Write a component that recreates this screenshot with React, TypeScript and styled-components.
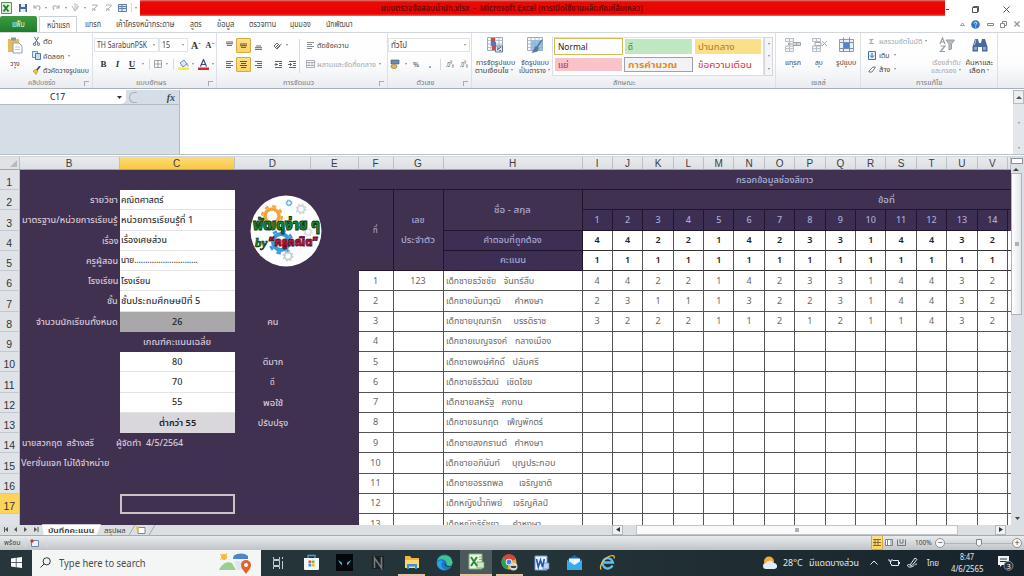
import React, { useLayoutEffect, useRef, useState } from 'react';
import styled, { createGlobalStyle, css } from 'styled-components';

const Global = createGlobalStyle`
  * { box-sizing: border-box; }
  body { margin: 0; overflow: hidden; background: #fff; }
  svg { display: block; flex: none; }
`;

const ui = `"Noto Sans", "Noto Sans Thai", "Loma", "Liberation Sans", sans-serif`;

/* ---------- text that keeps a fixed width ---------- */
const FitBox = styled.span<{ $w: number }>`
  display: block;
  flex: none;
  width: ${(p) => p.$w}px;
  white-space: pre;
  text-align: left;
`;
const FitInner = styled.span`
  display: inline-block;
  transform-origin: 0 50%;
`;
function Fit({ w, children }: { w: number; children: React.ReactNode }) {
  const ref = useRef<HTMLSpanElement>(null);
  const [k, setK] = useState(1);
  useLayoutEffect(() => {
    if (ref.current && ref.current.offsetWidth) setK(w / ref.current.offsetWidth);
  }, [w]);
  return (
    <FitBox $w={w}>
      <FitInner ref={ref} style={{ transform: `scaleX(${k})` }}>{children}</FitInner>
    </FitBox>
  );
}

/* ---------- window frame ---------- */
const Window = styled.div`
  width: 1024px;
  height: 576px;
  display: flex;
  flex-direction: column;
  overflow: hidden;
  background: #fff;
  font: 8px/10px ${ui};
  color: #444;
`;
const TitleBar = styled.div`
  height: 16px;
  flex: none;
  display: flex;
  align-items: flex-start;
`;
const QuickAccess = styled.div`
  width: 140px;
  height: 15px;
  display: flex;
  align-items: center;
`;
const RedTitle = styled.div`
  width: 805px;
  height: 16px;
  background: linear-gradient(#d98078 0, #e90a05 2px, #e80400 14px, #f06a64 16px);
  padding: 3px 0 0 241px;
  color: #6a0806;
  font-weight: 600;
  font-size: 8px;
`;
const WinButtons = styled.div`
  flex: 1;
  height: 19px;
  display: flex;
  align-items: center;
  color: #444;
`;
const Slot = styled.div<{ $w: number; $on?: boolean; $h?: number }>`
  width: ${(p) => p.$w}px;
  height: ${(p) => (p.$h ? p.$h + 'px' : 'auto')};
  flex: none;
  display: flex;
  align-items: center;
  justify-content: center;
  ${(p) => p.$on && css`
    height: 15px;
    border: 1px solid #d8a93c;
    border-radius: 1px;
    background: linear-gradient(#fbe08c, #fcd364);
  `}
`;

/* ---------- ribbon ---------- */
const TabRow = styled.div`
  height: 16px;
  flex: none;
  display: flex;
  align-items: center;
  font-size: 8px;
`;
const FileTab = styled.div`
  width: 37px;
  height: 16px;
  background: linear-gradient(#3e9a42, #1f7d2a);
  border-radius: 2px 2px 0 0;
  color: #eaf6e6;
  display: flex;
  align-items: center;
  justify-content: center;
`;
const HomeTab = styled.div`
  width: 38px;
  height: 17px;
  margin: 1px 8px 0 2px;
  border: 1px solid #cdd2d8;
  border-bottom: 0;
  background: #fff;
  display: flex;
  align-items: center;
  justify-content: center;
`;
const Tab = styled.div<{ $gap: number }>`
  margin-right: ${(p) => p.$gap}px;
`;
const Ribbon = styled.div`
  height: 57px;
  flex: none;
  display: flex;
  border-top: 1px solid #d3d7dc;
  border-bottom: 1px solid #a9afb6;
  background: linear-gradient(#fff 0, #fdfdfe 55%, #e9ecf0 100%);
`;
const Group = styled.div<{ $w: number }>`
  width: ${(p) => p.$w}px;
  flex: none;
  display: flex;
  flex-direction: column;
  border-right: 1px solid #dde0e4;
`;
const GroupBody = styled.div`
  height: 45px;
  display: flex;
`;
const GroupName = styled.div`
  height: 10px;
  display: flex;
  align-items: center;
  justify-content: center;
  color: #777c82;
  font-size: 7px;
`;
const Launcher = styled.i`
  width: 5px;
  height: 5px;
  border: 1px solid #a5abb3;
  border-right: 0;
  border-bottom: 0;
  margin-right: 3px;
`;
const NameText = styled.span`
  flex: 1;
  display: flex;
  justify-content: center;
`;
const BigButton = styled.div<{ $w: number; $dim?: boolean }>`
  width: ${(p) => p.$w}px;
  flex: none;
  display: flex;
  flex-direction: column;
  align-items: center;
  padding-top: 4px;
  font-size: 7.5px;
  line-height: 8px;
  color: ${(p) => (p.$dim ? '#a4a8ad' : '#444')};
  svg { margin-bottom: 5px; }
`;
const Col = styled.div<{ $pt?: number; $gap?: number }>`
  display: flex;
  flex-direction: column;
  padding-top: ${(p) => p.$pt ?? 0}px;
  gap: ${(p) => p.$gap ?? 0}px;
`;
const Row = styled.div<{ $dim?: boolean; $h?: number }>`
  display: flex;
  align-items: center;
  height: ${(p) => p.$h ?? 14}px;
  font-size: 7.5px;
  color: ${(p) => (p.$dim ? '#a4a8ad' : '#444')};
`;
const Combo = styled.div<{ $w: number }>`
  width: ${(p) => p.$w}px;
  height: 14px;
  flex: none;
  border: 1px solid #e0e3e7;
  background: #fff;
  display: flex;
  align-items: center;
  justify-content: space-between;
  padding: 0 3px 0 2px;
  font-size: 8px;
`;
const Arrow = styled.i`
  width: 0;
  height: 0;
  flex: none;
  border: 1.5px solid transparent;
  border-top: 2px solid #888;
  border-bottom: 0;
`;
const VLine = styled.i<{ $h: number }>`
  width: 1px;
  height: ${(p) => p.$h}px;
  background: #d7dade;
`;
const Letter = styled.span<{ $size: number; $italic?: boolean; $under?: boolean }>`
  font: ${(p) => (p.$italic ? 'italic ' : '')}bold ${(p) => p.$size}px "Liberation Serif", serif;
  text-decoration: ${(p) => (p.$under ? 'underline' : 'none')};
  color: #333;
`;
const Gallery = styled.div`
  width: 212px;
  height: 39px;
  margin-top: 4px;
  border: 1px solid #dcdfe3;
  background: #fff;
  display: grid;
  grid-template-columns: 69px 69px 68px;
  grid-template-rows: 17px 15px;
  gap: 2px 1px;
  padding: 0 1px 1px;
`;
const StyleCell = styled.div<{ $bg: string; $fg: string; $b?: string }>`
  background: ${(p) => p.$bg};
  color: ${(p) => p.$fg};
  border: 1px solid ${(p) => p.$b ?? '#fff'};
  padding-left: 3px;
  display: flex;
  align-items: center;
  font-size: 9.5px;
`;
const GalleryBar = styled.div`
  width: 9px;
  height: 39px;
  margin-top: 4px;
  border: 1px solid #d3d7db;
  background: #f4f5f7;
  display: flex;
  flex-direction: column;
  align-items: center;
  justify-content: space-around;
`;

/* ---------- formula bar ---------- */
const FormulaBar = styled.div`
  height: 65px;
  flex: none;
  display: flex;
  background: #fff;
  border-bottom: 1px solid #b9bfc6;
  margin-top: 1px;
`;
const NamePane = styled.div`
  width: 180px;
  background: #d5dde6;
  border-right: 1px solid #b4bac2;
`;
const NameRow = styled.div`
  height: 15px;
  display: flex;
  border-bottom: 1px solid #b4bac2;
`;
const NameBox = styled.div`
  width: 126px;
  background: #fff;
  border-radius: 0 0 5px 0;
  display: flex;
  align-items: center;
  padding: 0 4px 0 50px;
  justify-content: space-between;
  color: #222;
  font-size: 8.5px;
`;
const FxArea = styled.div`
  flex: 1;
  display: flex;
  align-items: center;
  justify-content: space-between;
  padding: 0 4px 0 3px;
  font: italic bold 10px "Liberation Serif", serif;
`;
const Bubble = styled.i`
  width: 8px;
  height: 11px;
  border: 1px solid #a9b2bd;
  border-right: 0;
  border-radius: 6px 0 0 6px;
`;
const FormulaInput = styled.div`
  flex: 1;
`;
const ThinBar = styled.div`
  width: 11px;
  background: #e3e7eb;
  display: flex;
  flex-direction: column;
  justify-content: space-between;
`;
const BarButton = styled.div<{ $h: number }>`
  height: ${(p) => p.$h}px;
  border: 1px solid #b4bac1;
  background: #eceff2;
  display: flex;
  align-items: center;
  justify-content: center;
`;

/* ---------- sheet ---------- */
const COLS = '100px 115px 76.5px 47.5px 35px 50px 139px repeat(14, 30.4px) 3px';
const SheetArea = styled.div`
  height: 368.5px;
  flex: none;
  display: flex;
  margin-top: 1px;
  border-top: 1px solid #d4d8dc;
`;
const SheetMain = styled.div`
  width: 1011px;
  display: flex;
  flex-direction: column;
  overflow: hidden;
`;
const HeadRow = styled.div`
  height: 13px;
  flex: none;
  display: grid;
  grid-template-columns: 19.5px ${COLS};
  background: #e0e2e6;
  border-bottom: 1px solid #a2a4aa;
`;
const ColHead = styled.div<{ $on?: boolean }>`
  display: flex;
  align-items: center;
  justify-content: center;
  font: 10px "Liberation Sans", sans-serif;
  color: #3c3c40;
  border-right: 1px solid #bcc0c6;
  background: ${(p) => (p.$on ? 'linear-gradient(#fbdc7d, #fac842)' : 'linear-gradient(#e9ebee, #dcdfe3)')};
`;
const Corner = styled.div`
  display: flex;
  align-items: flex-end;
  justify-content: flex-end;
  padding: 2px;
  border-right: 1px solid #bcc0c6;
`;
const SheetBody = styled.div`
  height: 354.5px;
  display: flex;
  overflow: hidden;
`;
const RowHeads = styled.div`
  width: 19.5px;
  flex: none;
  display: grid;
  grid-template-rows: 20px repeat(17, 20.25px);
  background: #dfe3e8;
`;
const RowHead = styled.div<{ $on?: boolean }>`
  display: flex;
  align-items: flex-end;
  justify-content: center;
  font: 10.5px/13px "Liberation Sans", sans-serif;
  color: #333;
  border-bottom: 1px solid #c3c8ce;
  border-right: 1px solid #b8bcc4;
  background: ${(p) => (p.$on ? '#fcd45c' : 'transparent')};
`;
const Grid = styled.div`
  width: 994px;
  flex: none;
  display: grid;
  grid-template-columns: ${COLS};
  grid-template-rows: 20px repeat(17, 20.25px);
  background: #403150;
  font-size: 9px;
`;
type CellProps = {
  $c: number; $r: number; $cs?: number; $rs?: number; $kind: 'plain' | 'white' | 'head' | 'key' | 'score' | 'grey' | 'light' | 'sel' | 'low' | 'top';
  $align?: 'start' | 'center' | 'end';
};
const kinds = {
  plain: css`color: #d8cad9; font-weight: 500;`,
  white: css`background: #fff; color: #333; border-bottom: 1px solid #e4e4e6; font-weight: 500;`,
  top: css`color: #aeb3dc; border-bottom: 1px solid #21152e; font-weight: 500;`,
  head: css`color: #aaa9d0; border-right: 1px solid #21152e; border-bottom: 1px solid #21152e; font-weight: 500;`,
  low: css`color: #aaa9d0; border-right: 1px solid #21152e; border-bottom: 1px solid #21152e; background: #3d2f54; font-weight: 500;`,
  key: css`background: #fff; color: #222; font-weight: 600; border-right: 1px solid #555; border-bottom: 1px solid #333;`,
  score: css`background: #fff; color: #666; border-right: 1px solid #555; border-bottom: 1px solid #555;`,
  grey: css`background: #a9a7aa; color: #222; font-weight: 500;`,
  light: css`background: #d9d6dc; color: #222; font-weight: 600;`,
  sel: css`border: 2px solid #cbc1c8;`,
};
const Cell = styled.div<CellProps>`
  grid-column: ${(p) => p.$c} / span ${(p) => p.$cs ?? 1};
  grid-row: ${(p) => p.$r} / span ${(p) => p.$rs ?? 1};
  display: flex;
  flex-direction: column;
  justify-content: center;
  align-items: ${(p) => p.$align ?? 'center'};
  padding: 0 1.5px;
  line-height: 20px;
  min-width: 0;
  white-space: pre;
  overflow: visible;
  ${(p) => kinds[p.$kind]}
`;
const VScroll = styled.div`
  width: 13px;
  background: #d9dfe5;
  display: flex;
  flex-direction: column;
`;
const Split = styled.div`
  height: 6px;
  margin: 1px 1px 1px 0;
  border: 1px solid #8d939b;
  background: #fff;
`;
const Thumb = styled.div`
  height: 142px;
  border: 1px solid #adb3bb;
  background: linear-gradient(90deg, #fff, #e3e6ea);
  margin: 0 2px 0 0;
  display: flex;
  align-items: center;
  justify-content: center;
`;
const Grip = styled.i`
  width: 4px;
  height: 4px;
  background: #adb2b8;
`;
const Spacer = styled.div`
  flex: 1;
`;

/* ---------- sheet tabs + status ---------- */
const SheetTabs = styled.div`
  height: 11.5px;
  flex: none;
  display: flex;
  align-items: center;
  background: #dcdfe2;
  border-bottom: 1px solid #a6abb0;
  font-size: 7.5px;
`;
const ActiveTab = styled.div`
  height: 11px;
  width: 59px;
  padding-left: 6px;
  background: #fdfdfd;
  font-weight: 600;
  color: #333;
  display: flex;
  align-items: center;
  clip-path: polygon(0 0, 100% 0, 92% 100%, 3% 100%);
`;
const HTrack = styled.div`
  width: 322px;
  height: 10px;
  display: flex;
  background: #fafafb;
  border: 1px solid #c1c5ca;
  align-items: center;
  justify-content: center;
`;
const HButton = styled.div`
  width: 11px;
  height: 10px;
  border: 1px solid #b4b8bd;
  background: #f0f1f3;
  display: flex;
  align-items: center;
  justify-content: center;
`;
const StatusBar = styled.div`
  height: 13.5px;
  flex: none;
  display: flex;
  align-items: center;
  background: linear-gradient(#e8ebed, #bfc4c8);
  font-size: 7px;
  padding-left: 4px;
`;
const Round = styled.div`
  width: 10px;
  height: 10px;
  border: 1px solid #8c9197;
  border-radius: 50%;
  background: #f6f7f8;
  display: flex;
  align-items: center;
  justify-content: center;
  font-size: 9px;
`;
const ZoomTrack = styled.div`
  width: 67px;
  display: flex;
  justify-content: center;
  background: linear-gradient(transparent 4px, #b1b6bb 4px, #b1b6bb 5px, transparent 5px);
`;

/* ---------- taskbar ---------- */
const Taskbar = styled.div`
  height: 26.5px;
  flex: none;
  display: flex;
  align-items: center;
  background: linear-gradient(90deg, #26363a 0, #243337 55%, #17232c 100%);
  color: #e6eaec;
`;
const Search = styled.div`
  width: 229px;
  height: 26.5px;
  background: #f4f5f5;
  display: flex;
  align-items: center;
  padding: 0 8px;
  color: #4b4b4b;
  font-size: 10.5px;
`;
const AppSlot = styled.div<{ $active?: boolean; $open?: boolean; $w?: number }>`
  width: ${(p) => p.$w ?? 33}px;
  height: 26.5px;
  flex: none;
  display: flex;
  align-items: center;
  justify-content: center;
  background: ${(p) => (p.$active ? '#4b585c' : 'transparent')};
  background-clip: padding-box;
  border-top: ${(p) => (p.$active ? 0 : 2)}px solid transparent;
  border-bottom: 2px solid ${(p) => (p.$open ? '#e4c3a4' : 'transparent')};
`;
const Clock = styled.div`
  width: 36px;
  display: flex;
  flex-direction: column;
  align-items: center;
  font-size: 8px;
  line-height: 12px;
`;

/* ---------- icons ---------- */
const Lines = ({ a = 'c', c = '#666' }: { a?: string; c?: string }) => (
  <svg width="9" height="9" viewBox="0 0 9 9" stroke={c} fill="none">
    {a === 't' && <path d="M1 1h7M1 2.7h7M2 4.4h5" />}
    {a === 'm' && <path d="M1 3h7M1 4.7h7M2 6.4h5" />}
    {a === 'b' && <path d="M2 5h5M1 6.7h7M1 8.4h7" />}
    {a === 'l' && <path d="M1 1.5h7M1 3.5h5M1 5.5h7M1 7.5h5" />}
    {a === 'c' && <path d="M1 1.5h7M2 3.5h5M1 5.5h7M2 7.5h5" />}
    {a === 'r' && <path d="M1 1.5h7M3 3.5h5M1 5.5h7M3 7.5h5" />}
    {a === 'i' && <path d="M1 1.5h7M5 3.5h3M5 5.5h3M1 7.5h7M4 4.5H1l1.5-1.5M1 4.5l1.5 1.5" />}
    {a === 'o' && <path d="M1 1.5h7M5 3.5h3M5 5.5h3M1 7.5h7M0 4.5h3.5L2 3M3.5 4.5L2 6" />}
  </svg>
);
const TableIcon = ({ v }: { v: 'cond' | 'fmt' }) => (
  <svg width="16" height="16" viewBox="0 0 16 16">
    <path d="M.5.5h15v13H.5z" fill="#f6f9fd" stroke="#9eaab8" />
    <path d="M.5 3.5h15M.5 7h15M.5 10.5h15M4 .5v13M8 .5v13M12 .5v13" stroke="#a9b5c4" fill="none" strokeWidth=".8" />
    {v === 'cond' ? (
      <>
        <path d="M4 1h4v4H4zM5 9h3v4H5z" fill="#c94b45" />
        <path d="M4 5h5v4H4z" fill="#4e79c0" />
        <path d="M8.5 9h7v6h-7z" fill="#dfe7f2" stroke="#52627a" strokeWidth=".8" />
        <path d="M10 13l4-3M10 11h1.5M12.5 13.5H14" stroke="#3d4b61" />
      </>
    ) : (
      <>
        <path d="M4 3.5h11.5v10H4z" fill="#7fb2e5" opacity=".8" />
        <path d="M15 3l-5 7M9 10l2 1-1 3-4 1z" stroke="#5b7795" fill="#3f7bb8" strokeWidth="1.4" />
      </>
    )}
  </svg>
);
const CellsIcon = ({ v }: { v: 'ins' | 'del' | 'fmt' }) => (
  <svg width="17" height="16" viewBox="0 0 17 16" fill="none">
    {v !== 'fmt' ? (
      <>
        <path d="M1.5 1.5h8v3h-8zM1.5 9h8v5.500h-8zM5.500 1.500v3M5.500 9v5.500M1.500 11.700h8" stroke="#b9bdc2" fill="#f5f6f7" />
        {v === 'ins' ? (
          <path d="M9 5.500h7.500v3H9zM12.500 5.500v3M8 7H4l2-1.500M4 7l2 1.500" stroke="#9da3a9" fill="#d8dbdf" />
        ) : (
          <path d="M4 5.500h6v3H4zM11 4l5 5M16 4l-5 5" stroke="#a1a7ae" />
        )}
      </>
    ) : (
      <>
        <path d="M1.500 2.500h14v12h-14z" fill="#e8f0fa" stroke="#8f9dae" />
        <path d="M1.500 5.500h14M1.500 11.500h14M5.500 .5v14M11.500 .5v14" stroke="#7d8ea4" />
        <path d="M6 6h5v5H6z" fill="#4b86d2" />
      </>
    )}
  </svg>
);
const Gear = ({ x, y, r, c }: { x: number; y: number; r: number; c: string }) => (
  <g transform={`translate(${x} ${y})`} fill="none" stroke={c}>
    <circle r={r} strokeWidth={r * 0.5} />
    <circle r={r * 1.4} strokeWidth={r * 0.35} strokeDasharray={`${r * 0.55} ${r * 0.55}`} />
  </g>
);
const LogoSlot = styled.div`
  padding-left: 5px;
  svg { overflow: visible; }
`;
const logoFont = { fontFamily: ui, fontWeight: 900 } as const;
const Logo = () => (
  <svg width="73" height="72" viewBox="0 0 73 72">
    <circle cx="36" cy="36" r="35.500" fill="#fff" />
    <Gear x={22} y={21} r={7} c="#f0a63c" />
    <Gear x={31} y={47} r={8} c="#3a9bdc" />
    <Gear x={39} y={8} r={2.200} c="#4aa8d8" />
    <Gear x={51} y={14} r={3.500} c="#ccd3dc" />
    <Gear x={38} y={61} r={3.500} c="#c3cdd0" />
    <Gear x={58} y={37} r={3} c="#d7dce2" />
    <text x="3" y="35" textLength="67" lengthAdjust="spacingAndGlyphs" fontSize="15" style={logoFont} fill="#1d8a2c" stroke="#0c3d16" strokeWidth="1">พัฒดุง่าย ๆ</text>
    <text x="5" y="52" fontSize="13" fontStyle="italic" fill="#1d8a2c" stroke="#0c3d16" strokeWidth=".7" fontFamily="Liberation Serif" fontWeight="700">by</text>
    <text x="19" y="51" textLength="49" lengthAdjust="spacingAndGlyphs" fontSize="13" style={logoFont} fill="#c3163a" stroke="#5a0a22" strokeWidth=".8">“ครูคณิต”</text>
  </svg>
);
const WinGlyph = () => (
  <svg width="11" height="11" viewBox="0 0 11 11" fill="#fff"><path d="M0 1.500L4.800.8v4.400H0zM5.500.7L11 0v5.200H5.500zM0 5.900h4.800v4.400L0 9.600zM5.500 5.900H11V11l-5.500-.8z" /></svg>
);
const SearchArt = () => (
  <svg width="34" height="22" viewBox="0 0 34 22">
    <circle cx="5" cy="5" r="3" fill="#f6b93b" />
    <path d="M1 2l2 1M8 1L7 3M1 8l2-2" stroke="#f6b93b" />
    <path d="M0 18c3-7 9-9 13-7l4 7z" fill="#9bcf8e" />
    <path d="M15 9h15v9H18z" fill="#dfe6ef" />
    <path d="M14 6c1-4 3-3 4-4 3-1 8-1 11 2v3H14z" fill="#4a87cf" />
    <path d="M27 22c-3-4-5-6-5-9a5 5 0 0 1 10 0c0 3-2 5-5 9z" fill="#e2622c" />
    <circle cx="27" cy="13" r="2" fill="#fff" />
  </svg>
);
const Store = () => (
  <svg width="17" height="17" viewBox="0 0 17 17">
    <path d="M5 4V1.500h7V4" stroke="#3aa4df" fill="none" strokeWidth="1.300" />
    <path d="M1 4h15v11a1 1 0 0 1-1 1H2a1 1 0 0 1-1-1z" fill="#f4f7f9" />
    <path d="M5.500 6.500h2.700v2.700H5.500z" fill="#e8533a" /><path d="M8.800 6.500h2.700v2.700H8.800z" fill="#7cb63c" />
    <path d="M5.500 9.800h2.700v2.700H5.500z" fill="#2c9ce0" /><path d="M8.800 9.800h2.700v2.700H8.800z" fill="#f4b52d" />
  </svg>
);
const Cat = () => (
  <svg width="17" height="17" viewBox="0 0 17 17"><path d="M0 0h17v17H0z" fill="#04080a" /><path d="M2 6l4 2.500v3L4 9.500zM15 6l-4 2.500v3l2-2z" fill="#25c3c9" /></svg>
);
const NIcon = () => (
  <svg width="14" height="15" viewBox="0 0 14 15"><path d="M1 1h12v13H1z" fill="#1b2023" /><path d="M3.500 13V3l7 10V2" fill="none" stroke="#737c81" strokeWidth="1.600" /></svg>
);
const Folder = () => (
  <svg width="16" height="15" viewBox="0 0 16 15"><path d="M1 1h5l1.500 2H15v10H1z" fill="#f0b53a" /><path d="M1 5h14v8H1z" fill="#fbd773" /><path d="M3 9h10v5h-2v-2.500H5V14H3z" fill="#3f8fd6" /></svg>
);
const Edge = () => (
  <svg width="17" height="17" viewBox="0 0 17 17"><circle cx="8.500" cy="8.500" r="8" fill="#1c78c9" /><path d="M1 7a8 8 0 0 1 15.500 1c0 3-2 4-4 4-2 0-2-1-2-2C11 5 4 4 1 7z" fill="#41c48e" /><path d="M6 8c-2 3 0 7 4 8-5 1-9-3-9-7 1-3 4-3 6-2z" fill="#2ba4e4" /><path d="M9.500 8.500c-.5 2 1 3.500 3.500 3.500h3c-2 1.500-7 1-7.500-2z" fill="#243337" /></svg>
);
const ExcelBig = () => (
  <svg width="17" height="17" viewBox="0 0 17 17"><path d="M1 1h13v15H1z" fill="#eaf4e4" stroke="#7db47f" /><path d="M9 9h7v6H9z" fill="#cfe8c8" stroke="#5fa565" strokeWidth=".7" /><path d="M3 4l6 9M9 4l-6 9" stroke="#2b8a3a" strokeWidth="2" /><path d="M11 4h3M11 6.500h3" stroke="#74b17a" /></svg>
);
const Chrome = () => (
  <svg width="17" height="17" viewBox="0 0 17 17"><circle cx="8" cy="8" r="7.500" fill="#e3b22f" /><path d="M8 8L1.500 4.200A7.500 7.500 0 0 1 15 5z" fill="#dc4437" /><path d="M8 8L1.500 4.200a7.500 7.500 0 0 0 5 11.200z" fill="#2f9e55" /><circle cx="8" cy="8" r="3.300" fill="#fff" /><circle cx="8" cy="8" r="2.500" fill="#4285f4" /><circle cx="12.500" cy="12.500" r="4" fill="#d9d5cb" /><path d="M9.500 12h6l-1 2h-4z" fill="#33423a" /></svg>
);
const Word = () => (
  <svg width="16" height="16" viewBox="0 0 16 16"><path d="M1 1h12v14H1z" fill="#eaf1fa" stroke="#6f9bd0" /><path d="M9 8h6v6H9z" fill="#bcd3ef" stroke="#5b88c6" strokeWidth=".7" /><path d="M2.500 4l1.800 8L6.500 5l2 7 1.800-8" fill="none" stroke="#2358a8" strokeWidth="1.600" /></svg>
);
const Mail = () => (
  <svg width="17" height="15" viewBox="0 0 17 15"><path d="M1 5l7.500-5L16 5v10H1z" fill="#1267ad" /><path d="M3 3.500h11V10H3z" fill="#eaf5fc" /><path d="M1 5l7.500 5L16 5v10H1z" fill="#39a9ea" /></svg>
);
const IE = () => (
  <svg width="17" height="17" viewBox="0 0 17 17" fill="none"><path d="M13.500 11.500a5.200 5.200 0 1 1 .4-3H5" stroke="#63bdee" strokeWidth="2.300" /><path d="M2 15.500C0 12 5 4 11 2c3-1 5-.5 4 2.500" stroke="#edc04a" strokeWidth="1.300" /></svg>
);

/* ---------- data ---------- */
const letters = 'BCDEFGHIJKLMNOPQRSTUV'.split('');
const key = [4, 4, 2, 2, 1, 4, 2, 3, 3, 1, 4, 4, 3, 2];
const scores: number[][] = [
  [4, 4, 2, 2, 1, 4, 2, 3, 3, 1, 4, 4, 3, 2],
  [2, 3, 1, 1, 1, 3, 2, 2, 3, 1, 4, 4, 3, 2],
  [3, 2, 2, 2, 1, 1, 2, 1, 2, 1, 1, 4, 3, 2],
];
const students: [string, number, string, number, number][] = [
  ['เด็กชายธวัชชัย', 50, 'จันทร์สืบ', 31, 8],
  ['เด็กชายนันทวุฒิ', 55, 'คำหงษา', 29, 14],
  ['เด็กชายบุณฑริก', 56, 'บรรดิราช', 33, 12],
  ['เด็กชายเบญจรงค์', 61, 'กลางเมือง', 36, 8],
  ['เด็กชายพงษ์ศักดิ์', 59, 'ปลับศรี', 26, 8],
  ['เด็กชายธีรวัฒน์', 53, 'เชิดไชย', 26, 8],
  ['เด็กชายสหรัฐ', 48, 'คงทน', 21, 8],
  ['เด็กชายธนกฤต', 52, 'เพ็ญพักตร์', 36, 9],
  ['เด็กชายสงกรานต์', 61, 'คำหงษา', 29, 8],
  ['เด็กชายอภินันท์', 55, 'บุญประกอบ', 44, 11],
  ['เด็กชายอรรถพล', 57, 'เจริญชาติ', 33, 16],
  ['เด็กหญิงน้ำทิพย์', 56, 'เจริญศิลป์', 35, 11],
  ['เด็กหญิงธิรัชยา', 53, 'คำหงษา', 29, 14],
];
const Name = styled.div<{ $gap: number }>`
  display: flex;
  gap: ${(p) => p.$gap}px;
  padding-left: .5px;
`;
const labels: [string, number][] = [
  ['รายวิชา', 28], ['มาตรฐาน/หน่วยการเรียนรู้', 96], ['เรื่อง', 16], ['ครูผู้สอน', 32], ['โรงเรียน', 30], ['ชั้น', 11], ['จำนวนนักเรียนทั้งหมด', 82],
];
const values: [string, number][] = [
  ['คณิตศาสตร์', 43], ['หน่วยการเรียนรู้ที่ 1', 72], ['เรื่องเศษส่วน', 46], ['นาย.............................', 77], ['โรงเรียน', 29], ['ชั้นประถมศึกษษปีที่ 5', 79],
];
const levels: [string, number][] = [['ดีมาก', 20], ['ดี', 5], ['พอใช้', 20], ['ปรับปรุง', 30]];

function GroupLabel({ w, children, launch }: { w: number; children: string; launch?: boolean }) {
  return (
    <GroupName>
      <NameText><Fit w={w}>{children}</Fit></NameText>
      {launch && <Launcher />}
    </GroupName>
  );
}

function RibbonGroups() {
  return (
    <Ribbon>
      <Group $w={93}>
        <GroupBody>
          <BigButton $w={30}>
            <svg width="16" height="17" viewBox="0 0 16 17"><path d="M1 2h11v13H1z" fill="#e9b95c" /><path d="M4 .5h5v3H4z" fill="#8d949d" /><path d="M6 6h6l3 3v7H6z" fill="#fff" stroke="#8fa2ba" /><path d="M8 10h5M8 12.500h5" stroke="#b9c7d6" /></svg>
            <Fit w={10}>วาง</Fit><Arrow />
          </BigButton>
          <Col $pt={1}>
            <Row><Slot $w={13}><svg width="7" height="9" viewBox="0 0 7 9" stroke="#41669a" fill="none"><path d="M1.500 0L5 6M5.500 0L2 6" /><circle cx="1.500" cy="7.300" r="1.200" /><circle cx="5.500" cy="7.300" r="1.200" /></svg></Slot><Fit w={9}>ตัด</Fit></Row>
            <Row $h={15}><Slot $w={13}><svg width="9" height="9" viewBox="0 0 9 9"><path d="M.5.5h5v6h-5z" fill="#dfeaf7" stroke="#6c8fbd" /><path d="M3.500 2.500h5v6h-5z" fill="#c9dcf2" stroke="#4c76ae" /></svg></Slot><Fit w={21}>คัดลอก</Fit><Slot $w={10}><Arrow /></Slot></Row>
            <Row><Slot $w={13}><svg width="9" height="9" viewBox="0 0 9 9"><path d="M1 5l3-2 2 2-2 3.500z" fill="#f0c13d" stroke="#a3883d" strokeWidth=".6" /><path d="M5 4l3-4" stroke="#39587f" strokeWidth="1.800" /></svg></Slot><Fit w={46}>ตัวคัดวางรูปแบบ</Fit></Row>
          </Col>
        </GroupBody>
        <GroupLabel w={28} launch>คลิปบอร์ด</GroupLabel>
      </Group>

      <Group $w={124}>
        <GroupBody>
          <Col $pt={5} $gap={5}>
            <Row>
              <Slot $w={1} />
              <Combo $w={65}><Fit w={50}>TH SarabunPSK</Fit><Arrow /></Combo>
              <Combo $w={29}><Fit w={8}>15</Fit><Arrow /></Combo>
              <Slot $w={16}><Letter $size={10}>A</Letter><Fit w={3}>ˆ</Fit></Slot>
              <Slot $w={12}><Letter $size={8}>A</Letter><Fit w={3}>ˇ</Fit></Slot>
            </Row>
            <Row>
              <Slot $w={4} />
              <Slot $w={13}><Letter $size={9}>B</Letter></Slot>
              <Slot $w={15}><Letter $size={9} $italic>I</Letter></Slot>
              <Slot $w={14}><Letter $size={9} $under>U</Letter></Slot>
              <Slot $w={7}><Arrow /></Slot>
              <Slot $w={7}><VLine $h={11} /></Slot>
              <Slot $w={10}><svg width="8" height="8" viewBox="0 0 8 8"><path d="M.5.5h7v7h-7zM4 0v8M0 4h8" fill="none" stroke="#8e9298" strokeWidth=".8" /></svg></Slot>
              <Slot $w={8}><Arrow /></Slot>
              <Slot $w={5}><VLine $h={11} /></Slot>
              <Slot $w={14}><svg width="11" height="11" viewBox="0 0 11 11"><path d="M2 4l4-3 3 4-4 3z" fill="#dce6f2" stroke="#57739a" strokeWidth=".8" /><path d="M9.500 4l1 3-1 .6z" fill="#3f72b5" /><path d="M0 8.500h11V11H0z" fill="#f5ee3c" /></svg></Slot>
              <Slot $w={6}><Arrow /></Slot>
              <Slot $w={14}><svg width="11" height="11" viewBox="0 0 11 11"><path d="M2.500 7.500L5.500.5l3 7M3.500 5.500h4" fill="none" stroke="#394e78" strokeWidth="1.200" /><path d="M0 8.500h11V11H0z" fill="#d8262c" /></svg></Slot>
              <Slot $w={5}><Arrow /></Slot>
            </Row>
          </Col>
        </GroupBody>
        <GroupLabel w={30} launch>แบบอักษร</GroupLabel>
      </Group>

      <Group $w={171}>
        <GroupBody>
          <Slot $w={5} />
          <Col $pt={5} $gap={5}>
            <Row><Slot $w={14}><Lines a="t" /></Slot><Slot $w={15} $on><Lines a="m" c="#6d5423" /></Slot><Slot $w={15}><Lines a="b" /></Slot><Slot $w={5} /><Slot $w={12}><svg width="9" height="9" viewBox="0 0 9 9" fill="none" stroke="#666"><path d="M1 5l3-3 3 3-3 3zM3 8l5.500-5M2.500 6.500l3-3" /></svg></Slot><Slot $w={8}><Arrow /></Slot></Row>
            <Row><Slot $w={14}><Lines a="l" /></Slot><Slot $w={15} $on><Lines c="#6d5423" /></Slot><Slot $w={15}><Lines a="r" /></Slot><Slot $w={5} /><Slot $w={14}><Lines a="i" /></Slot><Slot $w={14}><Lines a="o" /></Slot></Row>
          </Col>
          <Col $pt={6}><VLine $h={34} /></Col>
          <Col $pt={5} $gap={5}>
            <Row><Slot $w={4} /><Slot $w={13}><Lines a="l" c="#8a8f96" /></Slot><Fit w={32}>ตัดข้อความ</Fit></Row>
            <Row $dim><Slot $w={4} /><Slot $w={13}><svg width="9" height="8" viewBox="0 0 9 8"><path d="M.5.5h8v7h-8zM.5 2.500h8M.5 5.500h8M3 3v2M6 3v2" fill="none" stroke="#aaaeb4" /></svg></Slot><Fit w={59}>ผสานและจัดกึ่งกลาง</Fit><Slot $w={7}><Arrow /></Slot></Row>
          </Col>
        </GroupBody>
        <GroupLabel w={31} launch>การจัดแนว</GroupLabel>
      </Group>

      <Group $w={84}>
        <GroupBody>
          <Col $pt={5} $gap={5}>
            <Row><Combo $w={82}><Fit w={16}>ทั่วไป</Fit><Arrow /></Combo></Row>
            <Row>
              <Slot $w={14}><svg width="10" height="10" viewBox="0 0 10 10"><path d="M1 1h8v4H1z" fill="#6b8ab8" stroke="#456" strokeWidth=".6" /><ellipse cx="4" cy="7.500" rx="3" ry="2" fill="#e3bc4f" stroke="#957528" strokeWidth=".6" /></svg></Slot>
              <Slot $w={7}><Arrow /></Slot><Slot $w={14}>%</Slot><Slot $w={14}><b>,</b></Slot><Slot $w={6}><VLine $h={11} /></Slot>
              <Slot $w={14}><Fit w={8}>.0⁰₀</Fit></Slot><Slot $w={13}><Fit w={8}>.0⁰₀</Fit></Slot>
            </Row>
          </Col>
        </GroupBody>
        <GroupLabel w={18} launch>ตัวเลข</GroupLabel>
      </Group>

      <Group $w={304}>
        <GroupBody>
          <BigButton $w={46}><TableIcon v="cond" /><Fit w={39}>การจัดรูปแบบ</Fit><Row $h={8}><Fit w={34}>ตามเงื่อนไข</Fit><Slot $w={6}><Arrow /></Slot></Row></BigButton>
          <BigButton $w={34}><TableIcon v="fmt" /><Fit w={28}>จัดรูปแบบ</Fit><Row $h={8}><Fit w={27}>เป็นตาราง</Fit><Slot $w={6}><Arrow /></Slot></Row></BigButton>
          <Gallery>
            <StyleCell $bg="#fff" $fg="#222" $b="#d3bd58"><Fit w={30}>Normal</Fit></StyleCell>
            <StyleCell $bg="#bfe8c1" $fg="#2a7a34"><Fit w={5}>ดี</Fit></StyleCell>
            <StyleCell $bg="#fbe08a" $fg="#a97b1d"><Fit w={37}>ปานกลาง</Fit></StyleCell>
            <StyleCell $bg="#fac3c9" $fg="#b8322f"><Fit w={11}>แย่</Fit></StyleCell>
            <StyleCell $bg="#f2f3f6" $fg="#ea8b1e" $b="#9ba3b0"><b><Fit w={49}>การคำนวณ</Fit></b></StyleCell>
            <StyleCell $bg="#fff" $fg="#dc3038"><Fit w={54}>ข้อความเตือน</Fit></StyleCell>
          </Gallery>
          <GalleryBar><Arrow /><Arrow /><Arrow /></GalleryBar>
        </GroupBody>
        <GroupLabel w={22}>ลักษณะ</GroupLabel>
      </Group>

      <Group $w={85}>
        <GroupBody>
          <Slot $w={3} />
          <BigButton $w={27}><CellsIcon v="ins" /><Fit w={16}>แทรก</Fit><Arrow /></BigButton>
          <BigButton $w={26}><CellsIcon v="del" /><Fit w={8}>ลบ</Fit><Arrow /></BigButton>
          <BigButton $w={28}><CellsIcon v="fmt" /><Fit w={20}>รูปแบบ</Fit><Arrow /></BigButton>
        </GroupBody>
        <GroupLabel w={15}>เซลล์</GroupLabel>
      </Group>

      <Group $w={137}>
        <GroupBody>
          <Slot $w={3} />
          <Col $pt={1}>
            <Row $dim><Slot $w={15}><b>Σ</b></Slot><Fit w={43}>ผลรวมอัตโนมัติ</Fit><Slot $w={8}><Arrow /></Slot></Row>
            <Row><Slot $w={15}><svg width="8" height="9" viewBox="0 0 8 9"><path d="M.5.5h7v8h-7z" fill="#e6effa" stroke="#4675b4" /><path d="M4 2v4M2 4.500L4 6.500l2-2" stroke="#2d62a8" fill="none" /></svg></Slot><Fit w={11}>เติม</Fit><Slot $w={9}><Arrow /></Slot></Row>
            <Row><Slot $w={15}><svg width="8" height="7" viewBox="0 0 8 7"><path d="M1 5l4-4h2.500L4 6H1z" fill="#fff" stroke="#777" /></svg></Slot><Fit w={11}>ล้าง</Fit><Slot $w={9}><Arrow /></Slot></Row>
          </Col>
          <BigButton $w={33} $dim>
            <svg width="16" height="16" viewBox="0 0 16 16" fill="none" stroke="#999ea5"><path d="M1 7L3.500 1 6 7M2 5h3M1.500 9H6l-4.500 5.500H6" strokeWidth="1.200" /><path d="M7 3h8.500l-3 4v5l-2.500 1V7z" fill="#b8bcc1" /></svg>
            <Fit w={29}>เรียงลำดับ</Fit><Row $h={8} $dim><Fit w={26}>และกรอง</Fit><Slot $w={6}><Arrow /></Slot></Row>
          </BigButton>
          <BigButton $w={33}>
            <svg width="16" height="16" viewBox="0 0 16 16"><path d="M3 2h3l1 4h2l1-4h3l2.500 8v4.500H10V10H6v4.500H.5V10z" fill="#48699f" /><path d="M2 10h3v3H2zM11 10h3v3h-3z" fill="#8ca9d2" /><path d="M4 2.500L2.500 8" stroke="#a9bfdf" /></svg>
            <Fit w={28}>ค้นหาและ</Fit><Row $h={8}><Fit w={16}>เลือก</Fit><Slot $w={6}><Arrow /></Slot></Row>
          </BigButton>
        </GroupBody>
        <GroupLabel w={27}>การแก้ไข</GroupLabel>
      </Group>
    </Ribbon>
  );
}

function Sheet() {
  return (
    <SheetArea>
      <SheetMain>
        <HeadRow>
          <Corner><svg width="7" height="7"><path d="M7 0v7H0z" fill="#b5bac1" /></svg></Corner>
          {letters.map((l) => <ColHead key={l} $on={l === 'C'}>{l}</ColHead>)}
          <ColHead />
        </HeadRow>
        <SheetBody>
          <RowHeads>
            {Array.from({ length: 18 }, (_, i) => <RowHead key={i} $on={i === 16}>{i < 17 ? i + 1 : ''}</RowHead>)}
          </RowHeads>
          <Grid>
            {labels.map(([t, w], i) => <Cell key={t} $c={1} $r={i + 2} $kind="plain" $align="end"><Fit w={w}>{t}</Fit></Cell>)}
            {values.map(([t, w], i) => <Cell key={i} $c={2} $r={i + 2} $kind="white" $align="start"><Fit w={w}>{t}</Fit></Cell>)}
            <Cell $c={2} $r={8} $kind="grey"><Fit w={10}>26</Fit></Cell>
            <Cell $c={3} $r={8} $kind="plain"><Fit w={11}>คน</Fit></Cell>
            <Cell $c={3} $cs={2} $r={2} $rs={4} $kind="plain"><Name $gap={0}><LogoSlot><Logo /></LogoSlot><Slot $w={26} /></Name></Cell>
            <Cell $c={2} $r={9} $kind="plain"><Fit w={68}>เกณฑ์คะแนนเฉลี่ย</Fit></Cell>
            {[80, 70, 55].map((v, i) => <Cell key={v} $c={2} $r={10 + i} $kind="white"><Fit w={10}>{v}</Fit></Cell>)}
            <Cell $c={2} $r={13} $kind="light"><Fit w={37}>ต่ำกว่า 55</Fit></Cell>
            {levels.map(([t, w], i) => <Cell key={t} $c={3} $r={10 + i} $kind="plain"><Fit w={w}>{t}</Fit></Cell>)}
            <Cell $c={1} $cs={2} $r={14} $kind="plain" $align="start"><Name $gap={22}><Fit w={72}>นายสวกฤต  สร้างสรี</Fit><Fit w={67}>ผู้จัดทำ  4/5/2564</Fit></Name></Cell>
            <Cell $c={1} $cs={2} $r={15} $kind="plain" $align="start"><Fit w={88}>Verชั่นแจก ไม่ได้จำหน่าย</Fit></Cell>
            <Cell $c={2} $r={17} $kind="sel" />

            <Cell $c={5} $cs={18} $r={1} $kind="top"><Name $gap={0}><Slot $w={180} /><Fit w={77}>กรอกข้อมูลช่องสีขาว</Fit></Name></Cell>
            <Cell $c={5} $r={2} $rs={4} $kind="head"><Fit w={5}>ที่</Fit></Cell>
            <Cell $c={6} $r={2} $rs={4} $kind="head"><Fit w={13}>เลข</Fit><Fit w={34}>ประจำตัว</Fit></Cell>
            <Cell $c={7} $r={2} $rs={2} $kind="head"><Fit w={37}>ชื่อ - สกุล</Fit></Cell>
            <Cell $c={7} $r={4} $kind="low"><Fit w={58}>คำตอบที่ถูกต้อง</Fit></Cell>
            <Cell $c={7} $r={5} $kind="low"><Fit w={26}>คะแนน</Fit></Cell>
            <Cell $c={8} $cs={15} $r={2} $kind="top"><Name $gap={0}><Slot $w={179} /><Fit w={17}>ข้อที่</Fit></Name></Cell>
            {key.map((v, i) => (
              <React.Fragment key={i}>
                <Cell $c={8 + i} $r={3} $kind="low">{i + 1}</Cell>
                <Cell $c={8 + i} $r={4} $kind="key">{v}</Cell>
                <Cell $c={8 + i} $r={5} $kind="key">1</Cell>
              </React.Fragment>
            ))}
            <Cell $c={22} $r={4} $kind="key" /><Cell $c={22} $r={5} $kind="key" />
            {students.map(([a, wa, b, wb, gap], r) => (
              <React.Fragment key={r}>
                <Cell $c={5} $r={6 + r} $kind="score">{r + 1}</Cell>
                <Cell $c={6} $r={6 + r} $kind="score">{r === 0 ? '123' : ''}</Cell>
                <Cell $c={7} $r={6 + r} $kind="score" $align="start"><Name $gap={gap}><Fit w={wa}>{a}</Fit><Fit w={wb}>{b}</Fit></Name></Cell>
                {key.map((_, i) => <Cell key={i} $c={8 + i} $r={6 + r} $kind="score">{scores[r]?.[i] ?? ''}</Cell>)}
                <Cell $c={22} $r={6 + r} $kind="score" />
              </React.Fragment>
            ))}
          </Grid>
        </SheetBody>
      </SheetMain>
      <VScroll>
        <Split />
        <Slot $w={10} $h={8}><svg width="6" height="3"><path d="M0 3l3-3 3 3z" fill="#444" /></svg></Slot>
        <Thumb><Grip /></Thumb>
        <Spacer />
        <Slot $w={12} $h={12}><svg width="5" height="3"><path d="M0 0l2.500 3L5 0z" fill="#444" /></svg></Slot>
      </VScroll>
    </SheetArea>
  );
}

const Undo = ({ flip }: { flip?: boolean }) => (
  <svg width="8" height="7" viewBox="0 0 8 7" fill="none" stroke="#adb1b7"><path d={flip ? 'M7 1v3H4M7 4C5 1 1 1 1 4l1 2' : 'M1 1v3h3M1 4c2-3 6-3 6 0L6 6'} strokeWidth="1.200" /></svg>
);

export default function App() {
  return (
    <Window>
      <Global />
      <TitleBar>
        <QuickAccess>
          <Slot $w={12}><svg width="11" height="12" viewBox="0 0 11 12"><path d="M.5.5h10v11H.5z" fill="#dcefd9" stroke="#4b9556" /><path d="M2.500 3l5 6.500M7.500 3l-5 6.500" stroke="#247a33" strokeWidth="1.800" /></svg></Slot>
          <Slot $w={21}><svg width="8" height="8" viewBox="0 0 8 8"><path d="M0 0h8v8H0z" fill="#44689d" /><path d="M2 0h4v3H2zM1.500 5h5v3h-5z" fill="#e6edf6" /></svg></Slot>
          <Slot $w={8}><Undo /></Slot><Slot $w={10}><Arrow /></Slot>
          <Slot $w={10}><Undo flip /></Slot><Slot $w={9}><Arrow /></Slot>
          <Slot $w={11}><svg width="9" height="9" viewBox="0 0 9 9" fill="none" stroke="#b5b9be"><path d="M1 3l3 5 4-5M4 0v8M6 1v5" /></svg></Slot><Slot $w={7}><Arrow /></Slot>
          <Slot $w={14}><svg width="8" height="8" viewBox="0 0 8 8" fill="none" stroke="#aaaeb4"><path d="M1 1h5M1 7l6-6M1 5h3v2" /></svg></Slot>
          <Slot $w={14}><svg width="8" height="8" viewBox="0 0 8 8" fill="none" stroke="#aaaeb4"><path d="M1 1h5M1 7l6-6M1 5h3v2" /></svg></Slot>
          <Slot $w={12}><svg width="9" height="8" viewBox="0 0 9 8"><path d="M.5.5h8v7h-8z" fill="#dce6f4" stroke="#6880ad" /><path d="M1 2.500h7M1 4.500h7M4 1v6" stroke="#6880ad" /></svg></Slot>
          <Slot $w={6}><VLine $h={9} /></Slot><Slot $w={4}><Arrow /></Slot>
        </QuickAccess>
        <RedTitle><Fit w={262}>แบบตรวจข้อสอบน้ำนัก.xlsx  -  Microsoft Excel (การเปิดใช้งานผลิตภัณฑ์ล้มเหลว)</Fit></RedTitle>
        <WinButtons>
          <Slot $w={4}><svg width="3" height="1"><path d="M0 .5h3" stroke="#444" /></svg></Slot>
          <Slot $w={52}><svg width="7" height="7" viewBox="0 0 7 7" fill="none" stroke="#444"><path d="M.5 1.500h5v5h-5zM1.500 1.500v-1h5v5h-1" strokeWidth=".9" /></svg></Slot>
          <Slot $w={10}><svg width="7" height="7" viewBox="0 0 7 7" stroke="#444"><path d="M.5.5l6 6M6.500.5l-6 6" strokeWidth=".9" /></svg></Slot>
        </WinButtons>
      </TitleBar>
      <TabRow>
        <FileTab><Fit w={13}>แฟ้ม</Fit></FileTab>
        <HomeTab><Fit w={23}>หน้าแรก</Fit></HomeTab>
        <Tab $gap={15}><Fit w={16}>แทรก</Fit></Tab>
        <Tab $gap={15}><Fit w={59}>เค้าโครงหน้ากระดาษ</Fit></Tab>
        <Tab $gap={15}><Fit w={12}>สูตร</Fit></Tab>
        <Tab $gap={15}><Fit w={17}>ข้อมูล</Fit></Tab>
        <Tab $gap={14}><Fit w={27}>ตรวจทาน</Fit></Tab>
        <Tab $gap={15}><Fit w={21}>มุมมอง</Fit></Tab>
        <Tab $gap={0}><Fit w={27}>นักพัฒนา</Fit></Tab>
        <Spacer />
        <Slot $w={12}><svg width="5" height="4"><path d="M.5 3.500L2.500 1l2 2.500z" fill="none" stroke="#888" strokeWidth=".8" /></svg></Slot>
        <Slot $w={15}><svg width="9" height="9" viewBox="0 0 9 9"><circle cx="4.500" cy="4.500" r="4.300" fill="#3474c4" /><path d="M3.200 3.500c0-2 2.800-1.700 2.600 0-.1.800-1.200.8-1.200 2M4.600 6.500v1" stroke="#fff" fill="none" strokeWidth=".9" /></svg></Slot>
        <Slot $w={14}><svg width="7" height="3"><path d="M.5.5h6v2h-6z" fill="none" stroke="#888" /></svg></Slot>
        <Slot $w={13}><svg width="7" height="7" fill="none" stroke="#888"><path d="M.5 2.500h4v4h-4zM2.500 2V.5h4v4H5" /></svg></Slot>
        <Slot $w={14}><svg width="6" height="6" fill="none" stroke="#999"><path d="M.5.5l5 5M5.500.5l-5 5" strokeWidth="1.500" /></svg></Slot>
      </TabRow>
      <RibbonGroups />
      <FormulaBar>
        <NamePane>
          <NameRow>
            <NameBox><Fit w={15}>C17</Fit><svg width="5" height="3"><path d="M0 0l2.500 3L5 0z" fill="#333" /></svg></NameBox>
            <FxArea><Bubble /><span>fx</span></FxArea>
          </NameRow>
        </NamePane>
        <FormulaInput />
        <ThinBar>
          <BarButton $h={14}><svg width="6" height="3"><path d="M0 3l3-3 3 3z" fill="#555" /></svg></BarButton>
          <Slot $w={11} $h={12}><Arrow /></Slot>
          <Slot $w={11} $h={12}><Arrow /></Slot>
        </ThinBar>
      </FormulaBar>
      <Sheet />
      <SheetTabs>
        <Slot $w={42}><svg width="36" height="5" fill="#555"><path d="M1 0h1v5H1zM5 0v5L2 2.500zM14 0v5l-3-2.500zM21 0v5l3-2.500zM31 0v5l3-2.500zM34.500 0h1v5h-1z" /></svg></Slot>
        <ActiveTab><Fit w={46}>บันทึกคะแนน</Fit></ActiveTab>
        <Slot $w={3} /><Fit w={22}>สรุปผล</Fit>
        <Slot $w={31}><svg width="28" height="10" fill="none"><path d="M1 10L7 0M21 10l6-10" stroke="#a4a9ae" /><path d="M10 2.500h7v6h-7z" fill="#fff" stroke="#7b8794" /><path d="M8 1.500h3v3H8z" fill="#eac046" /></svg></Slot>
        <Spacer />
        <Slot $w={5}><VLine $h={9} /></Slot>
        <HButton><svg width="4" height="5"><path d="M4 0v5L0 2.500z" fill="#333" /></svg></HButton>
        <Slot $w={13} />
        <HTrack><Grip /></HTrack>
        <Slot $w={37} />
        <HButton><svg width="4" height="5"><path d="M0 0v5l4-2.500z" fill="#333" /></svg></HButton>
        <Slot $w={18} />
      </SheetTabs>
      <StatusBar>
        <Fit w={17}>พร้อม</Fit>
        <Slot $w={9}><VLine $h={11} /></Slot>
        <svg width="9" height="8" viewBox="0 0 9 8"><path d="M1.500 1.500h7v6h-7z" fill="#eef3f9" stroke="#6b86ad" /><circle cx="2" cy="2" r="1.700" fill="#c93b35" /></svg>
        <Slot $w={14}><VLine $h={11} /></Slot>
        <Spacer />
        <Slot $w={12} $on><svg width="8" height="7" fill="none" stroke="#7a6130"><path d="M0 .5h8M0 3.500h8M0 6.500h8M2 0v7M5 0v7" strokeWidth=".9" /></svg></Slot>
        <Slot $w={12}><svg width="8" height="7" fill="#fff" stroke="#777"><path d="M.5.5h7v6h-7zM2.500 1v5M6 1v5" strokeWidth=".9" /></svg></Slot>
        <Slot $w={13}><svg width="9" height="7" fill="none" stroke="#777"><path d="M.5.5v6h8v-6M3 0v4h3V0" /></svg></Slot>
        <Slot $w={3} />
        <Slot $w={24}><Fit w={17}>100%</Fit></Slot>
        <Round>−</Round>
        <ZoomTrack><svg width="6" height="8"><path d="M.5.5h5v5l-2.500 2-2.500-2z" fill="#f8f8f8" stroke="#80858b" /></svg></ZoomTrack>
        <Round>+</Round>
        <Slot $w={2} />
      </StatusBar>
      <Taskbar>
        <Slot $w={32}><WinGlyph /></Slot>
        <Search>
          <svg width="11" height="11" viewBox="0 0 11 11" fill="none" stroke="#333"><circle cx="6.700" cy="4.300" r="3.600" /><path d="M4 7L.5 10.500" /></svg>
          <Slot $w={8} />
          <Fit w={87}>Type here to search</Fit>
          <Spacer />
          <SearchArt />
        </Search>
        <AppSlot $w={33}><svg width="12" height="12" viewBox="0 0 12 12" fill="none" stroke="#c6cdd0"><path d="M1.500 0v2.500h6V0M1.500 3.500h6v5h-6zM1.500 12V9.500h6V12M10.500 0v2M10.500 4v8" /></svg></AppSlot>
        <AppSlot $w={34}><Store /></AppSlot>
        <AppSlot><Cat /></AppSlot>
        <AppSlot><NIcon /></AppSlot>
        <AppSlot $w={4} /><AppSlot $w={27} $open><Folder /></AppSlot><AppSlot $w={4} />
        <AppSlot $w={31}><Edge /></AppSlot>
        <AppSlot $w={32} $active $open><ExcelBig /></AppSlot>
        <AppSlot $w={4} /><AppSlot $w={27} $open><Chrome /></AppSlot><AppSlot $w={2} />
        <AppSlot $w={33}><Word /></AppSlot>
        <AppSlot><Mail /></AppSlot>
        <AppSlot><IE /></AppSlot>
        <Spacer />
        <svg width="15" height="14" viewBox="0 0 15 14"><circle cx="6" cy="5.500" r="5" fill="#f5a93a" /><path d="M3 13a3 3 0 0 1 0-6 4 4 0 0 1 7.500 0 3 3 0 0 1 1 6z" fill="#e4edf6" /></svg>
        <Slot $w={5} />
        <Fit w={20}>28°C</Fit><Slot $w={6} /><Fit w={50}>มีแดดบางส่วน</Fit>
        <Slot $w={29}><svg width="8" height="5" fill="none" stroke="#e6eaec"><path d="M.5 4.500L4 1l3.500 3.500" /></svg></Slot>
        <svg width="12" height="8" viewBox="0 0 12 8" fill="none" stroke="#e6eaec"><path d="M5 1.500h5.500v5h-7V5M11.500 3v2M1 0v2h3V0M2.500 2v3" /></svg>
        <Slot $w={25}><svg width="11" height="11" viewBox="0 0 11 11" fill="none" stroke="#e6eaec"><path d="M3 8l5-7 2 1.500-5 6zM3 8C-1 6 0 11 4 10s3-3 6-3" /></svg></Slot>
        <Slot $w={2} />
        <Fit w={12}>ไทย</Fit>
        <Slot $w={10} />
        <Clock><Fit w={14}>8:47</Fit><Fit w={32}>4/6/2565</Fit></Clock>
        <Slot $w={12} />
        <svg width="17" height="16" viewBox="0 0 17 16"><path d="M1 1h11v9H5l-2 2v-2H1z" fill="#f0f3f4" /><path d="M3 4h7M3 6.500h7" stroke="#2a383f" /><circle cx="11.500" cy="10.800" r="4.500" fill="#2a3338" stroke="#9ba3a7" strokeWidth=".8" /><text x="9.600" y="13.700" fontSize="7.500" fill="#fff" fontFamily="Noto Sans">3</text></svg>
        <Slot $w={10} />
      </Taskbar>
    </Window>
  );
}
